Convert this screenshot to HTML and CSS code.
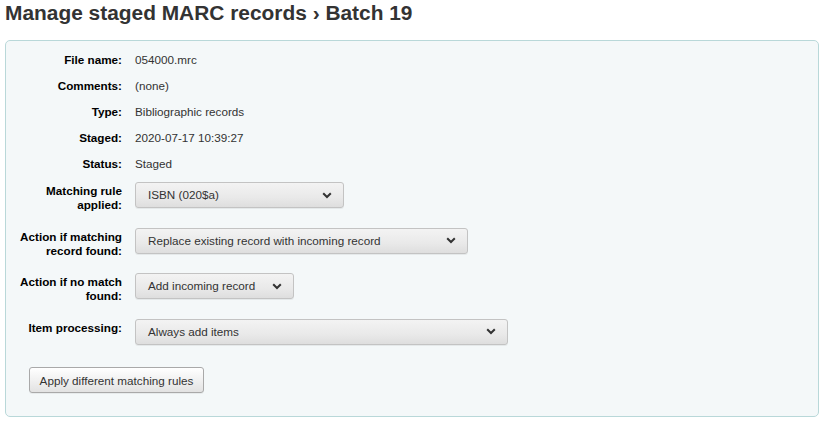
FILE: index.html
```html
<!DOCTYPE html>
<html lang="en">
<head>
<meta charset="utf-8">
<title>Manage staged MARC records › Batch 19</title>
<link rel="stylesheet" href="styles.css">
</head>
<body>
<div class="page">
  <h1 class="title">Manage staged MARC records › Batch 19</h1>
  <div class="panel">
    <ol class="rows">
      <li class="row"><span class="label">File name:</span><span class="value">054000.mrc</span></li>
      <li class="row"><span class="label">Comments:</span><span class="value">(none)</span></li>
      <li class="row"><span class="label">Type:</span><span class="value">Bibliographic records</span></li>
      <li class="row"><span class="label">Staged:</span><span class="value">2020-07-17 10:39:27</span></li>
      <li class="row row-pre"><span class="label">Status:</span><span class="value">Staged</span></li>
      <li class="row row-select"><span class="label">Matching rule applied:</span>
        <div class="select w-isbn"><span class="select-text">ISBN (020$a)</span><svg class="chev" width="10" height="7" viewBox="0 0 10 7"><path d="M1.2 1.2 L5 5 L8.8 1.2" fill="none" stroke="#333" stroke-width="2"/></svg></div>
      </li>
      <li class="row row-select"><span class="label">Action if matching record found:</span>
        <div class="select w-replace"><span class="select-text">Replace existing record with incoming record</span><svg class="chev" width="10" height="7" viewBox="0 0 10 7"><path d="M1.2 1.2 L5 5 L8.8 1.2" fill="none" stroke="#333" stroke-width="2"/></svg></div>
      </li>
      <li class="row row-select"><span class="label">Action if no match found:</span>
        <div class="select w-add"><span class="select-text">Add incoming record</span><svg class="chev" width="10" height="7" viewBox="0 0 10 7"><path d="M1.2 1.2 L5 5 L8.8 1.2" fill="none" stroke="#333" stroke-width="2"/></svg></div>
      </li>
      <li class="row row-select row-last"><span class="label">Item processing:</span>
        <div class="select w-items"><span class="select-text">Always add items</span><svg class="chev" width="10" height="7" viewBox="0 0 10 7"><path d="M1.2 1.2 L5 5 L8.8 1.2" fill="none" stroke="#333" stroke-width="2"/></svg></div>
      </li>
    </ol>
    <div class="actions">
      <button class="btn" type="button">Apply different matching rules</button>
    </div>
  </div>
</div>
</body>
</html>
```
FILE: styles.css
```css
html, body {
  margin: 0;
  padding: 0;
  background: #ffffff;
}
body {
  font-family: "Liberation Sans", Arial, sans-serif;
  font-size: 11.7px;
  color: #333333;
}
.page {
  padding: 0 5px;
}
.title {
  margin: 1px 0 15px 0;
  font-size: 20.9px;
  line-height: 24px;
  font-weight: bold;
  color: #333333;
}
.panel {
  background: #f4f8f9;
  border: 1px solid #b9d8d9;
  border-radius: 5px;
  padding: 12px 0 23px 0;
}
.rows {
  list-style: none;
  margin: 0;
  padding: 0 0 0 12px;
}
.row {
  display: flex;
  align-items: flex-start;
  line-height: 14px;
  padding-bottom: 12px;
}
.row-pre {
  padding-bottom: 11px;
}
.label {
  flex: 0 0 104px;
  width: 104px;
  margin-right: 13px;
  text-align: right;
  font-weight: bold;
  color: #000000;
}
.value {
  color: #333333;
}
.row-select {
  padding-bottom: 15.5px;
}
.row-select .label {
  padding-top: 2px;
}
.row-last {
  padding-bottom: 0;
}
.select {
  box-sizing: border-box;
  height: 26px;
  display: flex;
  align-items: center;
  justify-content: space-between;
  padding: 0 11px 0 12px;
  border: 1px solid #c3c3c3;
  border-radius: 3px;
  background: linear-gradient(to bottom, #f3f3f3 0%, #e9e9e9 60%, #dedede 100%);
  box-shadow: 0 1px 0 rgba(0,0,0,0.06);
  color: #333333;
}
.select-text {
  white-space: nowrap;
}
.chev {
  display: block;
  flex: 0 0 auto;
}
.w-isbn { width: 209px; }
.w-replace { width: 333px; }
.w-add { width: 159px; }
.w-items { width: 373px; }
.actions {
  padding: 22.5px 0 0 23px;
}
.btn {
  box-sizing: border-box;
  height: 26px;
  width: 175px;
  padding: 0;
  font-family: "Liberation Sans", Arial, sans-serif;
  font-size: 11.7px;
  color: #333333;
  border: 1px solid #a9a9a9;
  border-radius: 3px;
  background: linear-gradient(to bottom, #ffffff 0%, #f1f1f1 50%, #e2e2e2 100%);
  box-shadow: 0 1px 0 rgba(0,0,0,0.05);
}
```
